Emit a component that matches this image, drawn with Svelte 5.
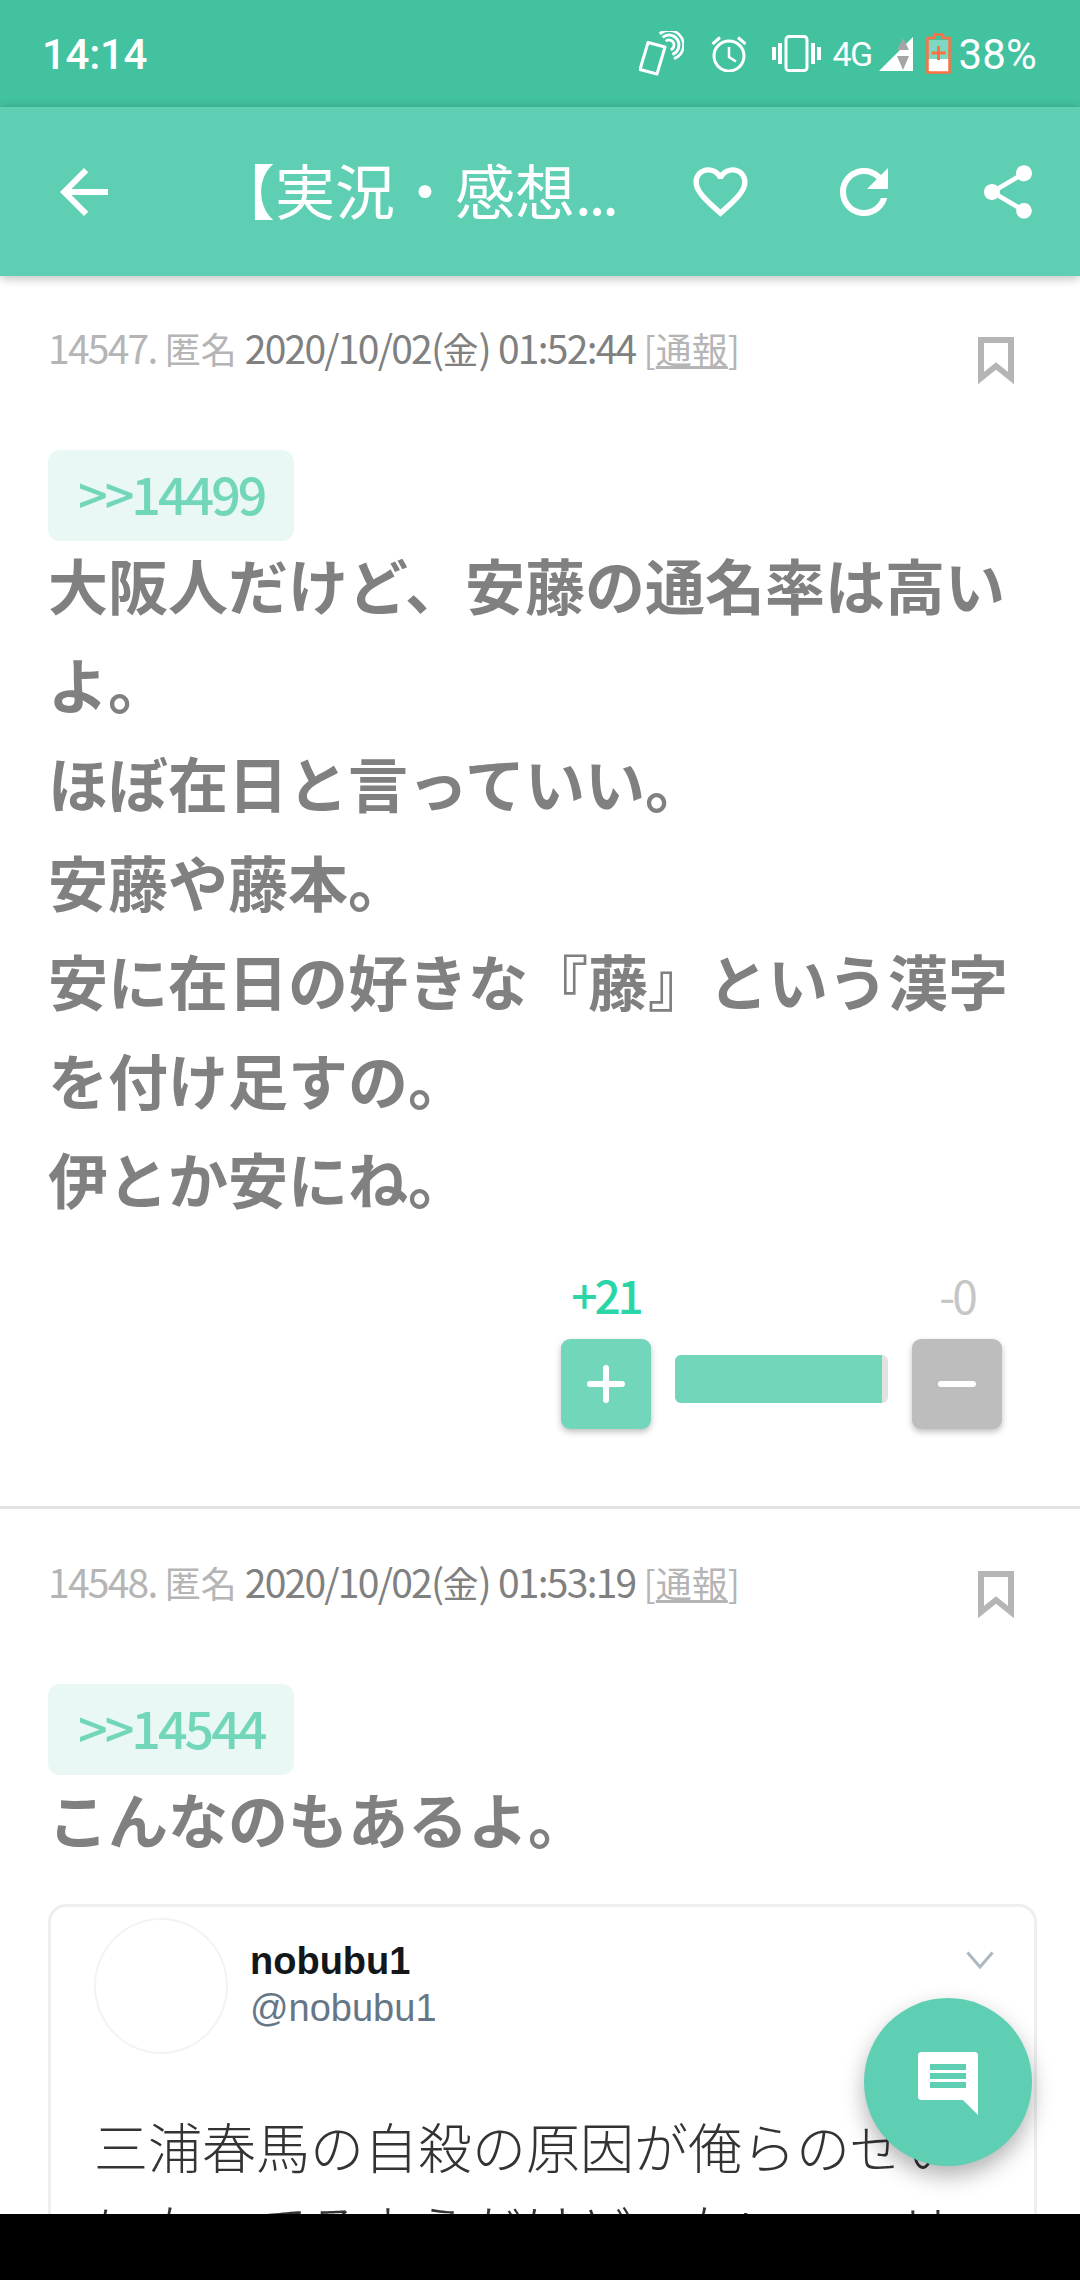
<script lang="ts">
  type Post = {
    no: number;
    date: string;
    day: string;
    time: string;
    anchor: string;
    lines: string[];
    plus?: number;
    minus?: number;
  };

  const posts: Post[] = [
    {
      no: 14547,
      date: '2020/10/02',
      day: '金',
      time: '01:52:44',
      anchor: '>>14499',
      lines: [
        '大阪人だけど、安藤の通名率は高いよ。',
        'ほぼ在日と言っていい。',
        '安藤や藤本。',
        '安に在日の好きな『藤』という漢字を付け足すの。',
        '伊とか安にね。'
      ],
      plus: 21,
      minus: 0
    },
    {
      no: 14548,
      date: '2020/10/02',
      day: '金',
      time: '01:53:19',
      anchor: '>>14544',
      lines: ['こんなのもあるよ。']
    }
  ];
</script>

<div class="screen">
  <div class="status">
    <span class="clock">14:14</span>
    <div class="status-icons">
      <svg class="ic-nfc" width="45" height="46" viewBox="0 0 45 46" fill="none" stroke="#fff">
        <path d="M9 11.500l17 4.500-8 27-17-4.500z" stroke-width="3" stroke-linejoin="round" />
        <path d="M26.800 10.200A5 5 0 1 1 31.700 18.700" stroke-width="2.800" />
        <path d="M23.600 6.300A10 10 0 1 1 33.400 23.400" stroke-width="2.800" />
        <path d="M20.700 2.900A14.500 14.500 0 1 1 35 27.600" stroke-width="2.800" />
      </svg>
      <svg class="ic-alarm" width="36" height="37" viewBox="0 0 36 37" fill="none" stroke="#fff" stroke-width="3">
        <circle cx="18" cy="21" r="15" />
        <path d="M18 12v10l7 4.500" stroke-width="2.500" />
        <path d="M1.500 9L9 2.500M34.500 9L27 2.500" />
      </svg>
      <svg class="ic-vibrate" width="49" height="37" viewBox="0 0 49 37" fill="none" stroke="#fff">
        <rect x="14" y="1.500" width="21" height="34" rx="3" stroke-width="3" />
        <path d="M2 12v13M8 8v21M41 8v21M47 12v13" stroke-width="4" />
      </svg>
      <span class="net">4G</span>
      <svg class="ic-signal" width="34" height="34" viewBox="0 0 34 34">
        <path d="M34 0v34H0z" fill="#fff" />
        <path d="M24 1l-6 12h12zM24 33l6-14H18z" fill="#a5a5a5" />
      </svg>
      <svg class="ic-battery" width="25" height="41" viewBox="0 0 25 41">
        <path d="M1.500 7h22v32h-22z" fill="#7fd9c2" />
        <path d="M1.500 26h22v13h-22z" fill="#fff" />
        <path d="M8 1.500h9V5h6.500v34.500h-22V5H8z" fill="none" stroke="#ff7043" stroke-width="2.500" stroke-linejoin="round" />
        <path d="M12.500 13v14M5.500 20h14" stroke="#ff7043" stroke-width="3" />
      </svg>
      <span class="pct">38%</span>
    </div>
  </div>

  <header class="appbar">
    <button class="back" aria-label="戻る">
      <svg width="72" height="72" viewBox="0 0 24 24" fill="#fff">
        <path d="M20 11H7.830l5.590-5.590L12 4l-8 8 8 8 1.410-1.410L7.830 13H20v-2z" />
      </svg>
    </button>
    <h1 class="title">【実況・感想<span class="dots">...</span></h1>
    <button class="action" aria-label="お気に入り">
      <svg width="65" height="65" viewBox="0 0 24 24" fill="#fff">
        <path d="M16.500 3c-1.740 0-3.410.81-4.500 2.090C10.910 3.810 9.240 3 7.500 3 4.420 3 2 5.420 2 8.500c0 3.780 3.400 6.860 8.550 11.540L12 21.350l1.450-1.320C18.600 15.360 22 12.280 22 8.500 22 5.420 19.580 3 16.500 3zm-4.400 15.550l-.1.1-.1-.1C7.140 14.240 4 11.390 4 8.500 4 6.500 5.500 5 7.500 5c1.540 0 3.040.99 3.570 2.360h1.870C13.460 5.990 14.960 5 16.500 5c2 0 3.500 1.500 3.500 3.500 0 2.890-3.140 5.740-7.900 10.050z" />
      </svg>
    </button>
    <button class="action" aria-label="更新">
      <svg width="72" height="72" viewBox="0 0 24 24" fill="#fff">
        <path d="M17.650 6.350C16.200 4.900 14.210 4 12 4c-4.420 0-7.990 3.580-7.990 8s3.570 8 7.990 8c3.730 0 6.840-2.550 7.730-6h-2.080c-.82 2.330-3.040 4-5.650 4-3.310 0-6-2.690-6-6s2.690-6 6-6c1.660 0 3.140.69 4.220 1.780L13 11h7V4l-2.350 2.350z" />
      </svg>
    </button>
    <button class="action" aria-label="共有">
      <svg width="64" height="64" viewBox="0 0 24 24" fill="#fff">
        <path d="M18 16.080c-.76 0-1.440.3-1.960.77L8.910 12.700c.05-.23.09-.46.09-.7s-.04-.47-.09-.7l7.050-4.110c.54.5 1.250.81 2.040.81 1.660 0 3-1.340 3-3s-1.340-3-3-3-3 1.340-3 3c0 .24.04.47.09.7L8.040 9.810C7.500 9.310 6.790 9 6 9c-1.660 0-3 1.340-3 3s1.340 3 3 3c.79 0 1.500-.31 2.040-.81l7.120 4.160c-.05.21-.08.43-.08.65 0 1.610 1.310 2.920 2.920 2.920 1.610 0 2.920-1.310 2.920-2.920s-1.310-2.920-2.920-2.920z" />
      </svg>
    </button>
  </header>

  <main class="list">
    {#each posts as post, i}
      <article class="post" class:first={i === 0}>
        <div class="meta">
          <p class="meta-text">
            <span class="num faint">{post.no}.</span>
            <span class="faint">匿名</span>
            <span class="num">{post.date}(</span><span>{post.day}</span><span class="num">)</span>
            <span class="num">{post.time}</span>
            <span class="faint">[<u>通報</u>]</span>
          </p>
          <svg class="bookmark" width="36" height="47" viewBox="0 0 36 47" fill="none" stroke="#b5b5b5" stroke-width="6">
            <path d="M3 3h30v38L18 29 3 41z" />
          </svg>
        </div>

        <div class="anchor">{post.anchor}</div>

        <div class="body">
          {#each post.lines as line}
            <p>{line}</p>
          {/each}
        </div>

        {#if post.plus !== undefined}
          <div class="votes">
            <span class="count plus">+{post.plus}</span>
            <span></span>
            <span class="count minus">-{post.minus}</span>

            <button class="vote green" aria-label="プラス">
              <svg width="38" height="38" viewBox="0 0 38 38" stroke="#fff" stroke-width="6" stroke-linecap="round">
                <path d="M19 3v32M3 19h32" />
              </svg>
            </button>
            <div class="bar">
              <div class="bar-fill" style="width: 97%"></div>
            </div>
            <button class="vote grey" aria-label="マイナス">
              <svg width="38" height="38" viewBox="0 0 38 38" stroke="#fff" stroke-width="6" stroke-linecap="round">
                <path d="M3 19h32" />
              </svg>
            </button>
          </div>
        {:else}
          <div class="tweet">
            <div class="tweet-head">
              <div class="avatar"></div>
              <div class="names">
                <span class="name">nobubu1</span>
                <span class="handle">@nobubu1</span>
              </div>
              <svg class="chevron" width="28" height="18" viewBox="0 0 28 18" fill="none" stroke="#aab8c2" stroke-width="3">
                <path d="M1.500 1.500L14 16 26.500 1.500" />
              </svg>
            </div>
            <p class="tweet-text">三浦春馬の自殺の原因が俺らのせいになってるようだけど、ない。マリ</p>
          </div>
        {/if}
      </article>
    {/each}
  </main>

  <button class="fab" aria-label="書き込む">
    <svg width="72" height="72" viewBox="0 0 24 24" fill="#fff">
      <path d="M3 2h18c.55 0 1 .45 1 1v20l-5-5H3c-.55 0-1-.45-1-1V3c0-.55.45-1 1-1zm3 4v2h12V6H6zm0 3v2h12V9H6zm0 3v2h12v-2H6z" fill-rule="evenodd" />
    </svg>
  </button>

  <div class="navbar"></div>
</div>

<style>
  :global(body) {
    margin: 0;
    background: #fff;
  }

  p,
  h1 {
    margin: 0;
  }

  button {
    padding: 0;
    border: none;
    background: none;
    font: inherit;
  }

  svg {
    display: block;
    flex: none;
  }

  .screen {
    position: relative;
    display: flex;
    flex-direction: column;
    width: 1080px;
    height: 2280px;
    overflow: hidden;
    background: #fff;
    font-family: 'Noto Sans CJK JP', 'Noto Sans', sans-serif;
  }

  /* status bar */
  .status {
    display: flex;
    flex: none;
    align-items: center;
    justify-content: space-between;
    height: 107px;
    padding: 2px 43px 0 42px;
    background: #43c2a0;
    color: #fff;
    font-family: Roboto, sans-serif;
    box-sizing: border-box;
  }

  .clock {
    font-size: 42px;
    font-weight: 500;
    letter-spacing: -0.3px;
  }

  .status-icons {
    display: flex;
    align-items: center;
    margin-top: -2px;
  }

  .ic-nfc {
    margin-right: 27px;
  }

  .ic-alarm {
    margin-right: 25px;
  }

  .ic-vibrate {
    margin-right: 11px;
  }

  .net {
    width: 38px;
    margin-right: 9px;
    font-size: 34px;
    letter-spacing: -1.5px;
  }

  .ic-battery {
    margin: 0 7px 0 13px;
  }

  .pct {
    padding-top: 2px;
    font-size: 42px;
    letter-spacing: 0.2px;
  }

  /* app bar */
  .appbar {
    position: relative;
    z-index: 2;
    display: flex;
    flex: none;
    align-items: center;
    height: 169px;
    background: #5fcfb3;
    box-shadow: 0 2px 10px rgba(0, 0, 0, 0.28);
  }

  .back {
    display: flex;
    justify-content: center;
    width: 168px;
  }

  .title {
    flex: 1;
    padding: 0 0 6px 47px;
    color: #fff;
    font-size: 60px;
    font-weight: 400;
    line-height: 80px;
    white-space: nowrap;
  }

  .dots {
    letter-spacing: -3px;
  }

  .action {
    display: flex;
    justify-content: center;
    width: 144px;
  }

  /* posts */
  .list {
    flex: 1;
    min-height: 0;
    overflow: hidden;
    padding-top: 3px;
  }

  .post {
    padding: 49px 48px 0;
  }

  .post.first {
    padding-top: 45px;
    padding-bottom: 77px;
    border-bottom: 3px solid #e2e2e2;
  }

  .meta {
    display: flex;
    justify-content: space-between;
    padding-right: 18px;
  }

  .meta-text {
    margin-top: -3px;
    color: #808080;
    font-size: 36px;
    line-height: 52px;
    white-space: nowrap;
  }

  .num {
    font-size: 39px;
    letter-spacing: -1.75px;
  }

  .faint {
    color: #b5b5b5;
  }

  .bookmark {
    margin-top: 13px;
  }

  .anchor {
    width: fit-content;
    margin-top: 66px;
    padding: 0 30px 6px;
    border-radius: 12px;
    background: #e9f8f4;
    color: #72d6bb;
    font-size: 52px;
    font-weight: 500;
    letter-spacing: -3px;
    line-height: 85px;
  }

  .body {
    margin-top: -7px;
    color: #808080;
    font-size: 60px;
    font-weight: 700;
    line-height: 99px;
  }

  /* votes */
  .votes {
    display: grid;
    grid-template-columns: 90px 213px 90px;
    column-gap: 24px;
    row-gap: 17px;
    justify-content: end;
    align-items: start;
    margin: 45px 30px 0 0;
  }

  .count {
    padding-bottom: 6px;
    font-size: 46px;
    letter-spacing: -3px;
    line-height: 44px;
    text-align: center;
  }

  .plus {
    color: #2ad6a8;
    font-weight: 500;
  }

  .minus {
    color: #c6c6c6;
  }

  .vote {
    display: flex;
    align-items: center;
    justify-content: center;
    height: 90px;
    border-radius: 9px;
    box-shadow: 0 3px 6px rgba(0, 0, 0, 0.25);
  }

  .green {
    background: #72d6bb;
  }

  .grey {
    background: #bdbdbd;
  }

  .bar {
    height: 48px;
    margin-top: 16px;
    border-radius: 6px;
    overflow: hidden;
    background: #e2e2e2;
  }

  .bar-fill {
    height: 100%;
    background: #72d6bb;
  }

  /* embedded tweet */
  .tweet {
    margin: 37px -5px 0 0;
    padding: 11px 60px 0 43px;
    border: 3px solid #eeeeee;
    border-radius: 18px;
  }

  .tweet-head {
    display: flex;
  }

  .avatar {
    flex: none;
    width: 130px;
    height: 132px;
    border: 2px solid #f3f3f3;
    border-radius: 50%;
  }

  .names {
    display: flex;
    flex-direction: column;
    margin: 20px 0 0 22px;
    font-family: 'Liberation Sans', sans-serif;
    font-size: 38px;
    line-height: 47px;
  }

  .name {
    color: #14171a;
    font-weight: 700;
  }

  .handle {
    color: #657786;
  }

  .chevron {
    margin: 33px -20px 0 auto;
  }

  .tweet-text {
    margin-top: 51px;
    color: #333;
    font-size: 54px;
    font-weight: 300;
    line-height: 82px;
  }

  /* overlays */
  .fab {
    position: absolute;
    right: 48px;
    bottom: 114px;
    z-index: 3;
    display: flex;
    align-items: center;
    justify-content: center;
    width: 168px;
    height: 168px;
    border-radius: 50%;
    background: #5fcfb3;
    box-shadow: 0 10px 22px rgba(0, 0, 0, 0.3);
  }

  .navbar {
    position: relative;
    z-index: 4;
    flex: none;
    height: 66px;
    background: #000;
  }
</style>
